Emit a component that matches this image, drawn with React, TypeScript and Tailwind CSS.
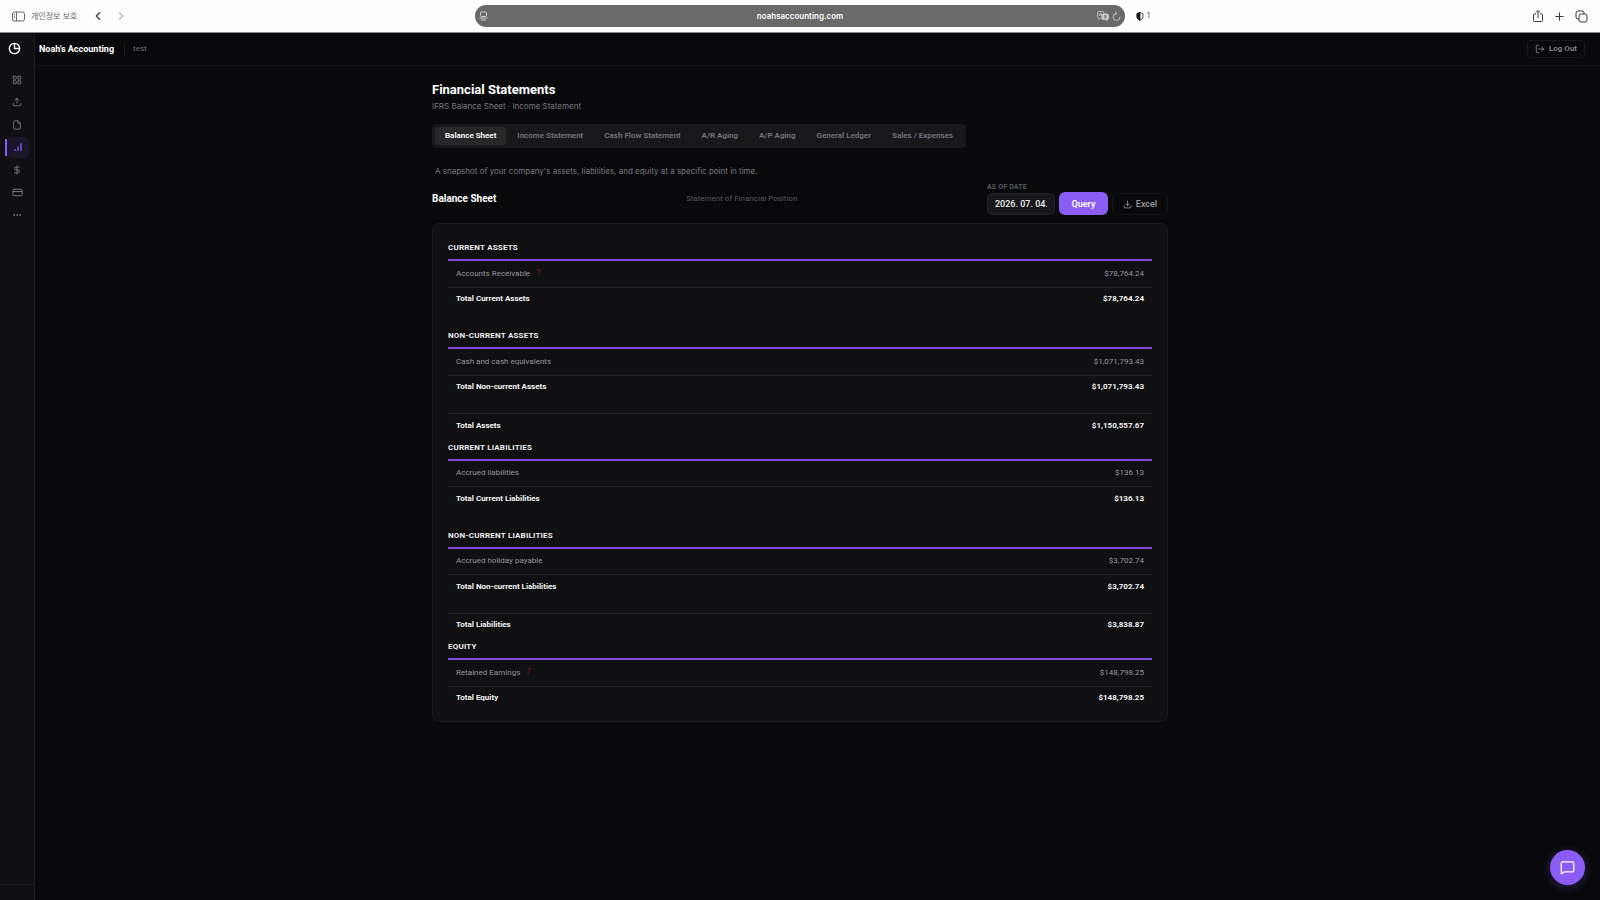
import type { ReactNode } from "react";
import {
  ChevronLeft,
  ChevronRight,
  CreditCard,
  DollarSign,
  Download,
  Ellipsis,
  File,
  LayoutGrid,
  LogOut,
  MessageSquare,
  Plus,
  Upload,
} from "lucide-react";

type Section = {
  title: string;
  account: string;
  amount: string;
  help?: boolean;
  totalLabel: string;
  total: string;
  grand?: { label: string; amount: string };
};

const sections: Section[] = [
  {
    title: "Current Assets",
    account: "Accounts Receivable",
    amount: "$78,764.24",
    help: true,
    totalLabel: "Total Current Assets",
    total: "$78,764.24",
  },
  {
    title: "Non-current Assets",
    account: "Cash and cash equivalents",
    amount: "$1,071,793.43",
    totalLabel: "Total Non-current Assets",
    total: "$1,071,793.43",
    grand: { label: "Total Assets", amount: "$1,150,557.67" },
  },
  {
    title: "Current Liabilities",
    account: "Accrued liabilities",
    amount: "$136.13",
    totalLabel: "Total Current Liabilities",
    total: "$136.13",
  },
  {
    title: "Non-current Liabilities",
    account: "Accrued holiday payable",
    amount: "$3,702.74",
    totalLabel: "Total Non-current Liabilities",
    total: "$3,702.74",
    grand: { label: "Total Liabilities", amount: "$3,838.87" },
  },
  {
    title: "Equity",
    account: "Retained Earnings",
    amount: "$148,798.25",
    help: true,
    totalLabel: "Total Equity",
    total: "$148,798.25",
  },
];

const tabs = [
  "Balance Sheet",
  "Income Statement",
  "Cash Flow Statement",
  "A/R Aging",
  "A/P Aging",
  "General Ledger",
  "Sales / Expenses",
];

const BarsIcon = () => (
  <svg width="8" height="8" viewBox="0 0 24 24" fill="none" stroke="currentColor" strokeWidth="4">
    <path d="M21 23V1M12 23V11M3 23v-5" />
  </svg>
);

const navItems: { label: string; icon: ReactNode; active?: boolean }[] = [
  { label: "Dashboard", icon: <LayoutGrid size={10} /> },
  { label: "Upload", icon: <Upload size={10} /> },
  { label: "Documents", icon: <File size={10} /> },
  { label: "Statements", icon: <BarsIcon />, active: true },
  { label: "Payroll", icon: <DollarSign size={10} /> },
  { label: "Banking", icon: <CreditCard size={11} /> },
  { label: "More", icon: <Ellipsis size={10} /> },
];

function BrowserBar() {
  return (
    <div className="h-[33px] shrink-0 flex items-center border-b border-[#8a8a8a] bg-[#fefefe] px-3 font-['Inter','Noto_Sans_CJK_KR',sans-serif] text-[#3c3c3c]">
      <div className="flex-1 flex items-center">
        <button aria-label="Sidebar" className="text-[#666]">
          <svg width="13" height="11" viewBox="0 0 26 22" fill="none" stroke="currentColor" strokeWidth="2">
            <rect x="1" y="2" width="24" height="18" rx="4" />
            <path d="M9 2v18M4 7h2M4 10h2M4 13h2" />
          </svg>
        </button>
        <span className="ml-[6px] text-[8px] leading-3 text-[#666]">개인정보 보호</span>
        <button aria-label="Back" className="ml-[14px]">
          <ChevronLeft size={14} strokeWidth={2} />
        </button>
        <button aria-label="Forward" className="ml-[9px] text-[#b8b8b8]">
          <ChevronRight size={14} strokeWidth={2} />
        </button>
      </div>
      <div className="w-[650px] h-[22px] rounded-full bg-[#696969] flex items-center px-1 text-[#d0d0d0]">
        <div className="flex-1">
          <svg width="9" height="10" viewBox="0 0 18 20" fill="none" stroke="currentColor" strokeWidth="2">
            <rect x="3" y="2" width="12" height="9" rx="2" />
            <path d="M1 14h16M4 18h10" />
          </svg>
        </div>
        <span className="text-[8px] leading-3 font-semibold text-white">noahsaccounting.com</span>
        <div className="flex-1 flex items-center justify-end gap-[3px]">
          <svg width="12" height="10" viewBox="0 0 24 20" fill="none" stroke="currentColor" strokeWidth="1.6">
            <path d="M12 14H7l-3 3v-3a3 3 0 0 1-3-3V4a3 3 0 0 1 3-3h7a3 3 0 0 1 3 3v1" />
            <path d="M4 10l3-6 3 6M5 8h4" />
            <path d="M12 6h8a3 3 0 0 1 3 3v5a3 3 0 0 1-3 3v2l-3-2h-5a2 2 0 0 1-2-2V8a2 2 0 0 1 2-2z" fill="currentColor" />
            <path d="M13 10h7M16 8v2M14 15c3-1 4-3 4-5M15 11c1 2 2 3 4 4" stroke="#696969" />
          </svg>
          <svg width="9" height="10" viewBox="0 0 18 20" fill="none" stroke="currentColor" strokeWidth="1.6">
            <path d="M9 5a7 7 0 1 0 7 7M9 5l-2-4M9 5l-4 3" />
          </svg>
        </div>
      </div>
      <div className="flex-1 flex items-center">
        <svg width="8" height="9" viewBox="0 0 16 18" fill="none" stroke="#222" strokeWidth="1.6" className="ml-[11px]">
          <path d="M8 1l6 2v6c0 4-3 6-6 8-3-2-6-4-6-8V3z" />
          <path d="M8 1v16c-3-2-6-4-6-8V3z" fill="#111" />
        </svg>
        <span className="ml-[3px] text-[7px] leading-3">1</span>
        <div className="ml-auto flex items-center gap-[9px]">
          <button aria-label="Share">
            <svg width="12" height="14" viewBox="0 0 24 28" fill="none" stroke="currentColor" strokeWidth="2">
              <path d="M8 10H5a2 2 0 0 0-2 2v11a2 2 0 0 0 2 2h14a2 2 0 0 0 2-2V12a2 2 0 0 0-2-2h-3M12 18V3M8 7l4-4 4 4" />
            </svg>
          </button>
          <button aria-label="New tab">
            <Plus size={13} strokeWidth={2} />
          </button>
          <button aria-label="Tabs">
            <svg width="13" height="13" viewBox="0 0 26 26" fill="none" stroke="currentColor" strokeWidth="2">
              <rect x="8" y="8" width="16" height="16" rx="4" />
              <path d="M8 18H6a4 4 0 0 1-4-4V6a4 4 0 0 1 4-4h8a4 4 0 0 1 4 4v2" />
            </svg>
          </button>
        </div>
      </div>
    </div>
  );
}

function Sidebar() {
  return (
    <aside className="w-[35px] shrink-0 flex flex-col border-r border-[#1c1c1f] bg-[#101012]">
      <div className="h-[31px] flex items-center pl-2 text-white">
        <svg width="13" height="13" viewBox="0 0 24 24" fill="none" stroke="currentColor" strokeWidth="2.6">
          <circle cx="12" cy="12" r="9.5" />
          <path d="M12 3v9h9" />
        </svg>
      </div>
      <nav className="mt-[6px] h-[155px] flex flex-col justify-between text-[#808086]">
        {navItems.map((item) =>
          item.active ? (
            <a key={item.label} href="#" aria-label={item.label} className="ml-[5px] mr-[5px] h-[21px] flex items-center">
              <span className="w-[2px] h-[17px] bg-[#8b5cf6]" />
              <span className="flex-1 h-[21px] flex items-center justify-center rounded-[5px] bg-[#1c162c] text-[#8b5cf6]">
                {item.icon}
              </span>
            </a>
          ) : (
            <a key={item.label} href="#" aria-label={item.label} className="h-5 flex items-center justify-center">
              {item.icon}
            </a>
          ),
        )}
      </nav>
      <div className="mt-auto h-4 border-t border-[#1c1c1f]" />
    </aside>
  );
}

function StatementSection({ section }: { section: Section }) {
  return (
    <section>
      <h3 className="h-[21px] border-b-2 border-[#7c4fe0] text-[8px] leading-4 font-bold uppercase tracking-wide text-[#ececee]">
        {section.title}
      </h3>
      <table className="w-full text-[8px] leading-3">
        <tbody>
          <tr className="h-[26px] border-b border-[#222225] text-[#96969d]">
            <th scope="row" className="pl-2 text-left font-normal">
              {section.account}
              {section.help && <span className="ml-[6px] text-[9px] italic text-[#8f0f2c]">?</span>}
            </th>
            <td className="pr-2 text-right">{section.amount}</td>
          </tr>
          <tr className="h-6 font-bold text-[#f4f4f5]">
            <th scope="row" className="pl-2 text-left font-bold">
              {section.totalLabel}
            </th>
            <td className="pr-2 text-right">{section.total}</td>
          </tr>
        </tbody>
      </table>
      {section.grand ? (
        <table className="mt-[14px] mb-[2px] w-full border-t border-[#222225] text-[8px] leading-3">
          <tbody>
            <tr className="h-6 font-bold text-[#f4f4f5]">
              <th scope="row" className="pl-2 text-left font-bold">
                {section.grand.label}
              </th>
              <td className="pr-2 text-right">{section.grand.amount}</td>
            </tr>
          </tbody>
        </table>
      ) : null}
    </section>
  );
}

export default function App() {
  return (
    <div className="min-h-screen flex flex-col bg-[#09090b] font-['Roboto',sans-serif] text-white">
      <BrowserBar />
      <div className="flex-1 flex">
        <Sidebar />
        <div className="flex-1 flex flex-col">
          <header className="h-[33px] flex items-center border-b border-[#131316] pl-1 pr-[15px]">
            <span className="text-[9px] leading-3 font-bold">Noah&apos;s Accounting</span>
            <span className="ml-[10px] h-3 w-px bg-[#1c1c1f]" />
            <span className="ml-2 text-[8px] leading-3 text-[#6c6c72]">test</span>
            <button className="ml-auto h-[18px] flex items-center gap-1 rounded border border-[#18181b] px-[7px] text-[8px] leading-3 font-medium text-[#8c8c93]">
              <LogOut size={10} />
              Log Out
            </button>
          </header>

          <main className="flex-1 pr-[35px]">
            <div className="mx-auto w-full max-w-[736px] pt-4 pb-8">
              <h1 className="text-[13px] leading-4 font-bold">Financial Statements</h1>
              <p className="mt-[2px] font-['Inter',sans-serif] text-[8px] leading-3 text-[#76767c]">
                IFRS Balance Sheet · Income Statement
              </p>

              <div role="tablist" className="mt-3 w-fit h-6 flex items-center gap-px rounded-[5px] bg-[#18181b] px-[3px]">
                {tabs.map((tab, i) => (
                  <button
                    key={tab}
                    role="tab"
                    aria-selected={i === 0}
                    className={
                      i === 0
                        ? "h-[18px] rounded bg-[#27272a] px-[10px] text-[8px] leading-3 font-semibold text-white"
                        : "h-[18px] rounded px-[10px] text-[8px] leading-3 font-semibold text-[#76767c]"
                    }
                  >
                    {tab}
                  </button>
                ))}
              </div>

              <p className="mt-[17px] pl-[3px] font-['Inter',sans-serif] text-[8px] leading-3 text-[#76767c]">
                A snapshot of your company&apos;s assets, liabilities, and equity at a specific point in time.
              </p>

              <div className="mt-[5px] flex items-center justify-between">
                <h2 className="text-[10px] leading-3 font-bold">Balance Sheet</h2>
                <span className="text-[8px] leading-3 text-[#56565c]">Statement of Financial Position</span>
                <form className="flex items-end gap-1" onSubmit={(e) => e.preventDefault()}>
                  <div className="flex flex-col">
                    <label htmlFor="as-of" className="text-[7px] leading-[11px] font-semibold uppercase tracking-wide text-[#5c5c62]">
                      As of date
                    </label>
                    <input
                      id="as-of"
                      defaultValue="2026. 07. 04."
                      className="h-[22px] w-[68px] rounded-[5px] border border-[#212124] bg-[#18181b] px-[7px] text-[9px] leading-3 font-medium text-[#ececee]"
                    />
                  </div>
                  <button className="h-[23px] w-[49px] rounded-[6px] bg-[#8b5cf6] text-[9px] leading-3 font-semibold">
                    Query
                  </button>
                  <button
                    type="button"
                    className="h-[22px] w-[56px] flex items-center justify-center gap-1 rounded-[6px] border border-[#141417] text-[9px] leading-3 font-medium text-[#9a9aa1]"
                  >
                    <Download size={9} />
                    Excel
                  </button>
                </form>
              </div>

              <div className="mt-2 rounded-[7px] border border-[#1c1c1f] bg-[#101012] px-[15px] pt-4 pb-[11px]">
                {sections.map((section) => (
                  <div key={section.title} className={section.grand || section.title === "Equity" ? "" : "mb-[17px]"}>
                    <StatementSection section={section} />
                  </div>
                ))}
              </div>
            </div>
          </main>
        </div>
      </div>

      <button
        aria-label="Open chat"
        className="fixed right-[15px] bottom-[15px] size-[35px] flex items-center justify-center rounded-full bg-[#8b5cf6] shadow-[0_2px_10px_rgba(139,92,246,0.3)]"
      >
        <MessageSquare size={15} />
      </button>
    </div>
  );
}
